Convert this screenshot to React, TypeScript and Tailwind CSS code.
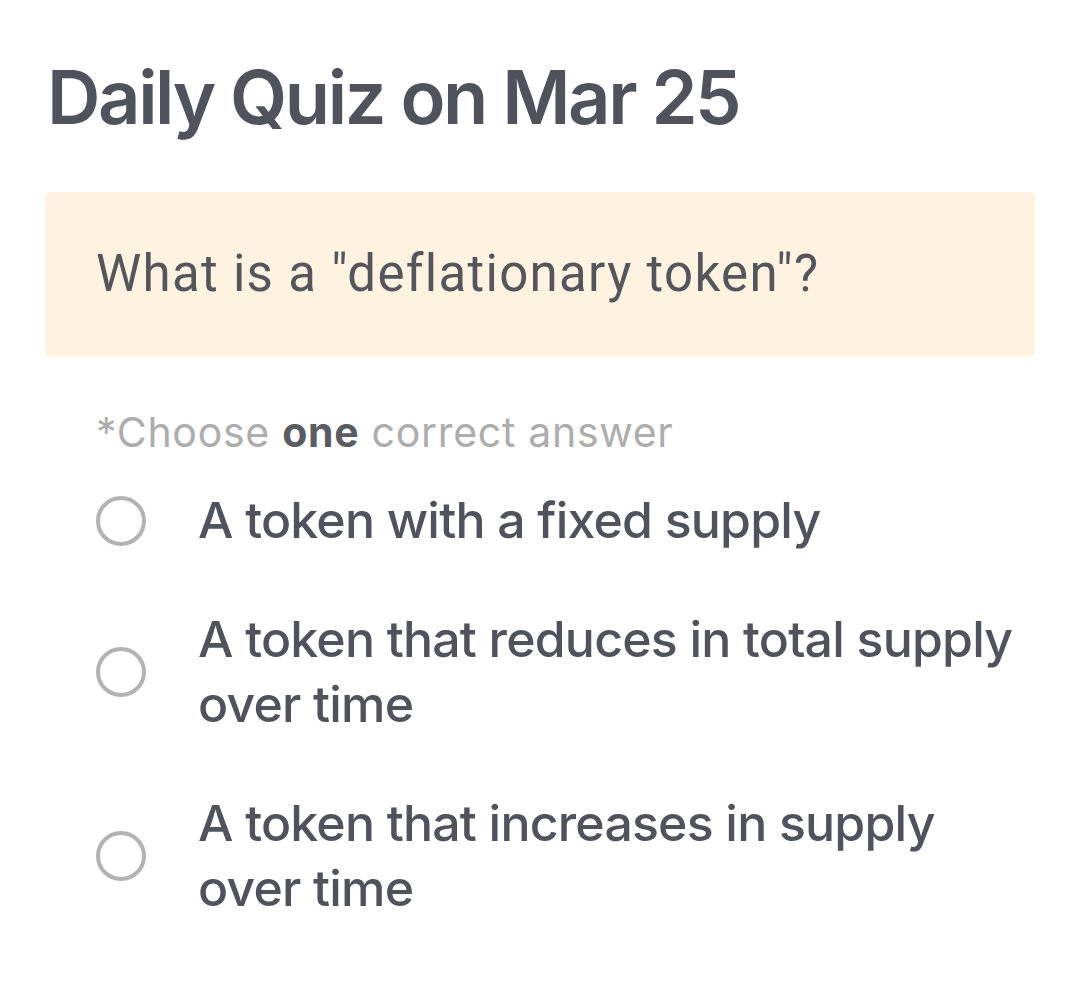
import React from 'react';

const options = [
  'A token with a fixed supply',
  'A token that reduces in total supply over time',
  'A token that increases in supply over time',
];

const Radio = () => (
  <span className="block w-[50px] h-[50px] rounded-full border-[4px] border-[#b3b3b3] shrink-0" />
);

export default function App() {
  return (
    <div className="w-[1080px] h-[1008px] bg-white px-[45px] pt-[57px] font-['Inter',sans-serif]">
      <h1 className="text-[74px] leading-[80px] font-semibold text-[#50525c] tracking-[-2.4px] pl-[2px]">
        Daily Quiz on Mar 25
      </h1>

      <div className="mt-[55px] h-[165px] rounded-md bg-[#fef3e1] flex items-center px-[51px]">
        <p className="font-['Roboto',sans-serif] text-[51px] font-normal text-[#55565c] tracking-[1.3px]">
          What is a "deflationary token"?
        </p>
      </div>

      <p className="mt-[50px] pl-[51px] text-[41px] leading-[50px] text-[#adadad] tracking-[0.7px]">
        *Choose <span className="font-bold text-[#5b5c63]">one</span> correct answer
      </p>

      <div className="mt-[31px] flex flex-col gap-[54px] pl-[51px]">
        {options.map((opt) => (
          <label key={opt} className="flex items-center gap-[52px]">
            <Radio />
            <span className="text-[50px] leading-[65px] font-medium text-[#50525c] tracking-[-0.8px] max-w-[830px]">
              {opt}
            </span>
          </label>
        ))}
      </div>
    </div>
  );
}
